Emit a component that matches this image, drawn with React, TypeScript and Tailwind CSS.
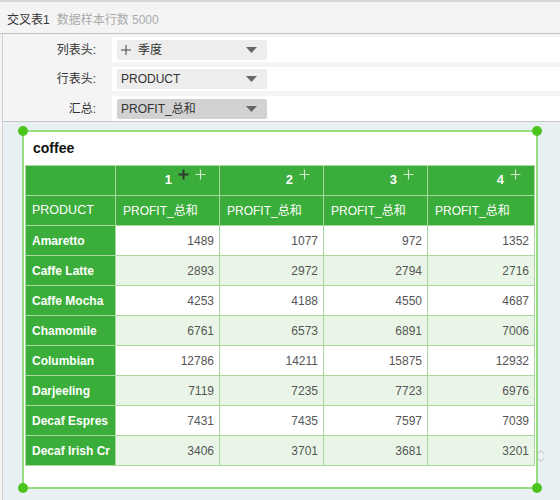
import React from 'react';

// ─── 数据 ──────────────────────────────────────────────

const ROWS: [string, number[]][] = [
  ['Amaretto', [1489, 1077, 972, 1352]],
  ['Caffe Latte', [2893, 2972, 2794, 2716]],
  ['Caffe Mocha', [4253, 4188, 4550, 4687]],
  ['Chamomile', [6761, 6573, 6891, 7006]],
  ['Columbian', [12786, 14211, 15875, 12932]],
  ['Darjeeling', [7119, 7235, 7723, 6976]],
  ['Decaf Espres', [7431, 7435, 7597, 7039]],
  ['Decaf Irish Cr', [3406, 3701, 3681, 3201]],
];

const COL_WIDTHS = ['w-[90px]', 'w-[104px]', 'w-[104px]', 'w-[104px]', 'w-[107px]'];

// ─── 小部件 ──────────────────────────────────────────────

function Plus({ dark }: { dark?: boolean }) {
  return (
    <svg width="11" height="11" viewBox="0 0 11 11" className="block">
      <path
        d="M5.5 0.5V10.5M0.5 5.5H10.5"
        stroke={dark ? '#2f3a2f' : '#cfe8c8'}
        strokeWidth={dark ? 2 : 1.2}
      />
    </svg>
  );
}

function Caret() {
  return (
    <svg width="11" height="6" viewBox="0 0 11 6" className="block">
      <path d="M0 0H11L5.5 6Z" fill="#666" />
    </svg>
  );
}

function FormRow({
  label,
  value,
  active,
  h,
}: {
  label: string;
  value: React.ReactNode;
  active?: boolean;
  h: string;
}) {
  return (
    <div className={`flex ${h}`}>
      <div className="w-[109px] flex items-center justify-end pr-[16px] text-[12px] text-[#333]">{label}</div>
      <div className="flex-1 bg-white flex items-center pl-[5px]">
        <div
          className={`w-[150px] h-[20px] rounded-[2px] flex items-center justify-between pl-[4px] pr-[10px] text-[12px] text-[#333] ${
            active ? 'bg-[#d2d2d2]' : 'bg-[#ededed]'
          }`}
        >
          <span>{value}</span>
          <Caret />
        </div>
      </div>
    </div>
  );
}

// ─── 页面 ──────────────────────────────────────────────

export default function App() {
  return (
    <div
      className="w-[560px] h-[500px] overflow-hidden bg-[#f4f4f4] flex flex-col"
      style={{ fontFamily: '"Liberation Sans", Arial, "Noto Sans CJK SC", sans-serif' }}
    >
      <div className="h-[2px] bg-[#d6d6d6]" />
      {/* 标题栏 */}
      <div className="h-[32px] border-b border-[#c6c6c6] flex items-end pb-[4px] pl-[7px] text-[12px]">
        <span className="text-[#333]">交叉表1</span>
        <span className="ml-[7px] text-[#aaa]">数据样本行数 5000</span>
      </div>

      <div className="flex-1 flex flex-col ml-[2px] border-l border-[#d0d0d0]">
        {/* 表单 */}
        <div className="pt-[3px] flex flex-col gap-[5px] border-b border-[#c6c6c6]">
          <FormRow
            h="h-[25px]"
            label="列表头:"
            value={
              <span className="flex items-center gap-[7px]">
                <svg width="10" height="10" viewBox="0 0 10 10" className="block">
                  <path d="M5 0V10M0 5H10" stroke="#444" strokeWidth="1" />
                </svg>
                季度
              </span>
            }
          />
          <FormRow h="h-[24px]" label="行表头:" value="PRODUCT" />
          <FormRow h="h-[25px]" label="汇总:" value="PROFIT_总和" active />
        </div>

        {/* 画布 */}
        <div className="flex-1 bg-[#e9f0f4] relative pt-[8px] pl-[19px]">
          <div className="relative w-[516px] h-[359px] border-2 border-[#96dc82] bg-white">
            <span className="absolute -top-[6px] -left-[6px] w-[10px] h-[10px] rounded-full bg-[#4cc51e]" />
            <span className="absolute -top-[6px] -right-[6px] w-[10px] h-[10px] rounded-full bg-[#4cc51e]" />
            <span className="absolute -bottom-[6px] -left-[6px] w-[10px] h-[10px] rounded-full bg-[#4cc51e]" />
            <span className="absolute -bottom-[6px] -right-[6px] w-[10px] h-[10px] rounded-full bg-[#4cc51e]" />

            <div className="h-[33px] flex items-center pl-[9px] text-[14px] font-bold text-[#111]">coffee</div>

            <table className="ml-[1px] border-collapse table-fixed text-[12px]">
              <colgroup>
                {COL_WIDTHS.map((w, i) => (
                  <col key={i} className={w} />
                ))}
              </colgroup>
              <tbody>
                <tr className="h-[30px] bg-[#3aad3a] text-white">
                  <td className="border border-[#a8d89a]" />
                  {[1, 2, 3, 4].map((n) => (
                    <td key={n} className="border border-[#a8d89a] p-0 align-top">
                      <div className="flex justify-end items-start pr-[13px] pt-[3px] gap-[6px]">
                        <span className="mt-[3px] font-bold text-[13px] leading-[16px]">{n}</span>
                        {n === 1 && <Plus dark />}
                        <Plus />
                      </div>
                    </td>
                  ))}
                </tr>
                <tr className="h-[30px] bg-[#3aad3a] text-white text-[12.5px]">
                  <td className="border border-[#a8d89a] pl-[6px]">PRODUCT</td>
                  {[1, 2, 3, 4].map((n) => (
                    <td key={n} className="border border-[#a8d89a] pl-[7px] text-[12px]">
                      PROFIT_总和
                    </td>
                  ))}
                </tr>
                {ROWS.map(([name, vals], i) => (
                  <tr key={name} className={`h-[30px] ${i % 2 ? 'bg-[#e9f6e7]' : 'bg-white'}`}>
                    <td className="border border-[#a8d89a] bg-[#3aad3a] text-white font-bold pl-[6px] whitespace-nowrap overflow-hidden">
                      {name}
                    </td>
                    {vals.map((v, j) => (
                      <td key={j} className="border border-[#a8d89a] text-right pr-[5px] text-[#555]">
                        {v}
                      </td>
                    ))}
                  </tr>
                ))}
              </tbody>
            </table>
          </div>

          {/* 滚动提示 */}
          <svg width="10" height="14" viewBox="0 0 10 14" className="absolute left-[533px] top-[327px]">
            <path d="M1.5 5L5 1.5L8.5 5M1.5 9L5 12.5L8.5 9" fill="none" stroke="#bdbdbd" strokeWidth="1" />
          </svg>
        </div>
      </div>
    </div>
  );
}
